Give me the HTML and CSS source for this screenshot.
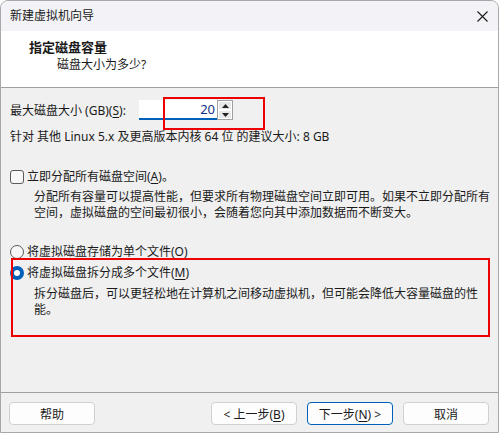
FILE: index.html
```html
<!DOCTYPE html>
<html lang="zh-CN">
<head>
    <meta charset="UTF-8">
    <title>新建虚拟机向导</title>
    <link rel="stylesheet" href="styles.css">
</head>
<body>
    <div class="window">
        <!-- 标题栏 -->
        <div class="titlebar">
            <span class="title">新建虚拟机向导</span>
            <svg class="close" width="11" height="11" viewBox="0 0 11 11">
                <path d="M0.5 0.5 L10.5 10.5 M10.5 0.5 L0.5 10.5" stroke="#1a1a1a" stroke-width="1.1" fill="none"/>
            </svg>
        </div>

        <!-- 页头 -->
        <div class="header">
            <div class="header-title">指定磁盘容量</div>
            <div class="header-sub">磁盘大小为多少?</div>
        </div>

        <!-- 内容 -->
        <div class="body">
            <div class="size-row">
                <span>最大磁盘大小 (GB)(<u>S</u>):</span>
                <div class="spin">
                    <div class="spin-input">20</div>
                    <div class="spin-btns">
                        <div class="spin-btn"><svg width="7" height="4" viewBox="0 0 7 4"><path d="M0 4 L3.5 0 L7 4 Z" fill="#222"/></svg></div>
                        <div class="spin-btn"><svg width="7" height="4" viewBox="0 0 7 4"><path d="M0 0 L3.5 4 L7 0 Z" fill="#222"/></svg></div>
                    </div>
                </div>
            </div>
            <div class="hint">针对 其他 Linux 5.x 及更高版本内核 64 位 的建议大小: 8 GB</div>

            <label class="option check-opt">
                <span class="checkbox"></span>
                <span>立即分配所有磁盘空间(<u>A</u>)。</span>
            </label>
            <div class="desc">分配所有容量可以提高性能，但要求所有物理磁盘空间立即可用。如果不立即分配所有<br>空间，虚拟磁盘的空间最初很小，会随着您向其中添加数据而不断变大。</div>

            <label class="option radio-first">
                <span class="radio"></span>
                <span>将虚拟磁盘存储为单个文件(<u>O</u>)</span>
            </label>
            <label class="option radio-second">
                <span class="radio checked"></span>
                <span>将虚拟磁盘拆分成多个文件(<u>M</u>)</span>
            </label>
            <div class="desc">拆分磁盘后，可以更轻松地在计算机之间移动虚拟机，但可能会降低大容量磁盘的性<br>能。</div>
        </div>

        <!-- 底部按钮 -->
        <div class="footer">
            <button class="btn">帮助</button>
            <div class="nav-btns">
                <button class="btn">&lt; 上一步(<u>B</u>)</button>
                <button class="btn default">下一步(<u>N</u>) &gt;</button>
                <button class="btn">取消</button>
            </div>
        </div>

        <!-- 标注框 -->
        <div class="mark mark-size"></div>
        <div class="mark mark-split"></div>
    </div>
</body>
</html>
```

FILE: styles.css
```css
* {
    box-sizing: border-box;
}
body {
    margin: 0;
    background-color: #ffffff;
    font-family: "Noto Sans", "Noto Sans CJK SC", sans-serif;
    font-size: 12px;
    color: #1a1a1a;
}
u {
    text-underline-offset: 2px;
}
.window {
    position: relative;
    width: 499px;
    height: 433px;
    background-color: #f0f0f0;
    border: 1px solid #a8a8a8;
    border-radius: 8px 8px 0 0;
    overflow: hidden;
    display: flex;
    flex-direction: column;
}
.titlebar {
    height: 30px;
    flex: none;
    display: flex;
    align-items: center;
    justify-content: space-between;
    padding: 0 10px 0 9px;
    background-color: #f3f3f7;
}
.title {
    font-size: 12px;
    line-height: 16px;
}
.header {
    height: 57px;
    flex: none;
    background-color: #ffffff;
    border-bottom: 1px solid #a0a0a0;
    padding: 8px 0 0 28px;
}
.header-title {
    font-weight: bold;
    font-size: 13px;
    line-height: 17px;
}
.header-sub {
    padding-left: 28px;
    line-height: 17px;
}
.body {
    flex: 1;
    padding: 12px 8px 0 9px;
}
.size-row {
    display: flex;
    align-items: center;
    height: 20px;
}
.size-row > span {
    width: 129px;
}
.spin {
    display: flex;
    height: 20px;
}
.spin-input {
    width: 78px;
    height: 20px;
    background-color: #ffffff;
    border-bottom: 2px solid #005fb8;
    text-align: right;
    padding-right: 2px;
    line-height: 19px;
    font-size: 13px;
    color: #10308a;
}
.spin-btns {
    width: 16px;
    display: flex;
    flex-direction: column;
    border: 1px solid #a0a0a0;
    background-color: #f0f0f0;
}
.spin-btn {
    flex: 1;
    display: flex;
    align-items: center;
    justify-content: center;
    border: 1px solid #ffffff;
    background-color: #e8e8e8;
}
.hint {
    margin-top: 9px;
    line-height: 16px;
}
.option {
    display: flex;
    align-items: center;
    gap: 3px;
    line-height: 16px;
}
.check-opt {
    margin-top: 24px;
}
.radio-first {
    margin-top: 23px;
}
.radio-second {
    margin-top: 5px;
}
.checkbox {
    width: 14px;
    height: 14px;
    border: 1px solid #5a5a5a;
    border-radius: 3px;
    background-color: #f7f7f7;
}
.radio {
    width: 14px;
    height: 14px;
    border: 1px solid #5a5a5a;
    border-radius: 50%;
    background-color: #f7f7f7;
}
.radio.checked {
    border: 4px solid #005fb8;
    background-color: #ffffff;
}
.desc {
    margin-top: 4px;
    padding-left: 24px;
    line-height: 16px;
    white-space: nowrap;
}
.radio-second + .desc {
    margin-top: 5px;
}
.footer {
    height: 40px;
    flex: none;
    border-top: 1px solid #a0a0a0;
    display: flex;
    justify-content: space-between;
    padding: 9px 9px 0 8px;
}
.nav-btns {
    display: flex;
    gap: 10px;
}
.btn {
    width: 86px;
    height: 23px;
    font-family: inherit;
    font-size: 12px;
    color: #1a1a1a;
    background-color: #fdfdfd;
    border: 1px solid #d0d0d0;
    border-radius: 4px;
    padding: 0;
}
.btn.default {
    border-color: #005fb8;
}
.mark {
    position: absolute;
    border: 2px solid #ee0000;
}
.mark-size {
    left: 162px;
    top: 96px;
    width: 102px;
    height: 33px;
}
.mark-split {
    left: 10px;
    top: 257px;
    width: 479px;
    height: 79px;
}
```
